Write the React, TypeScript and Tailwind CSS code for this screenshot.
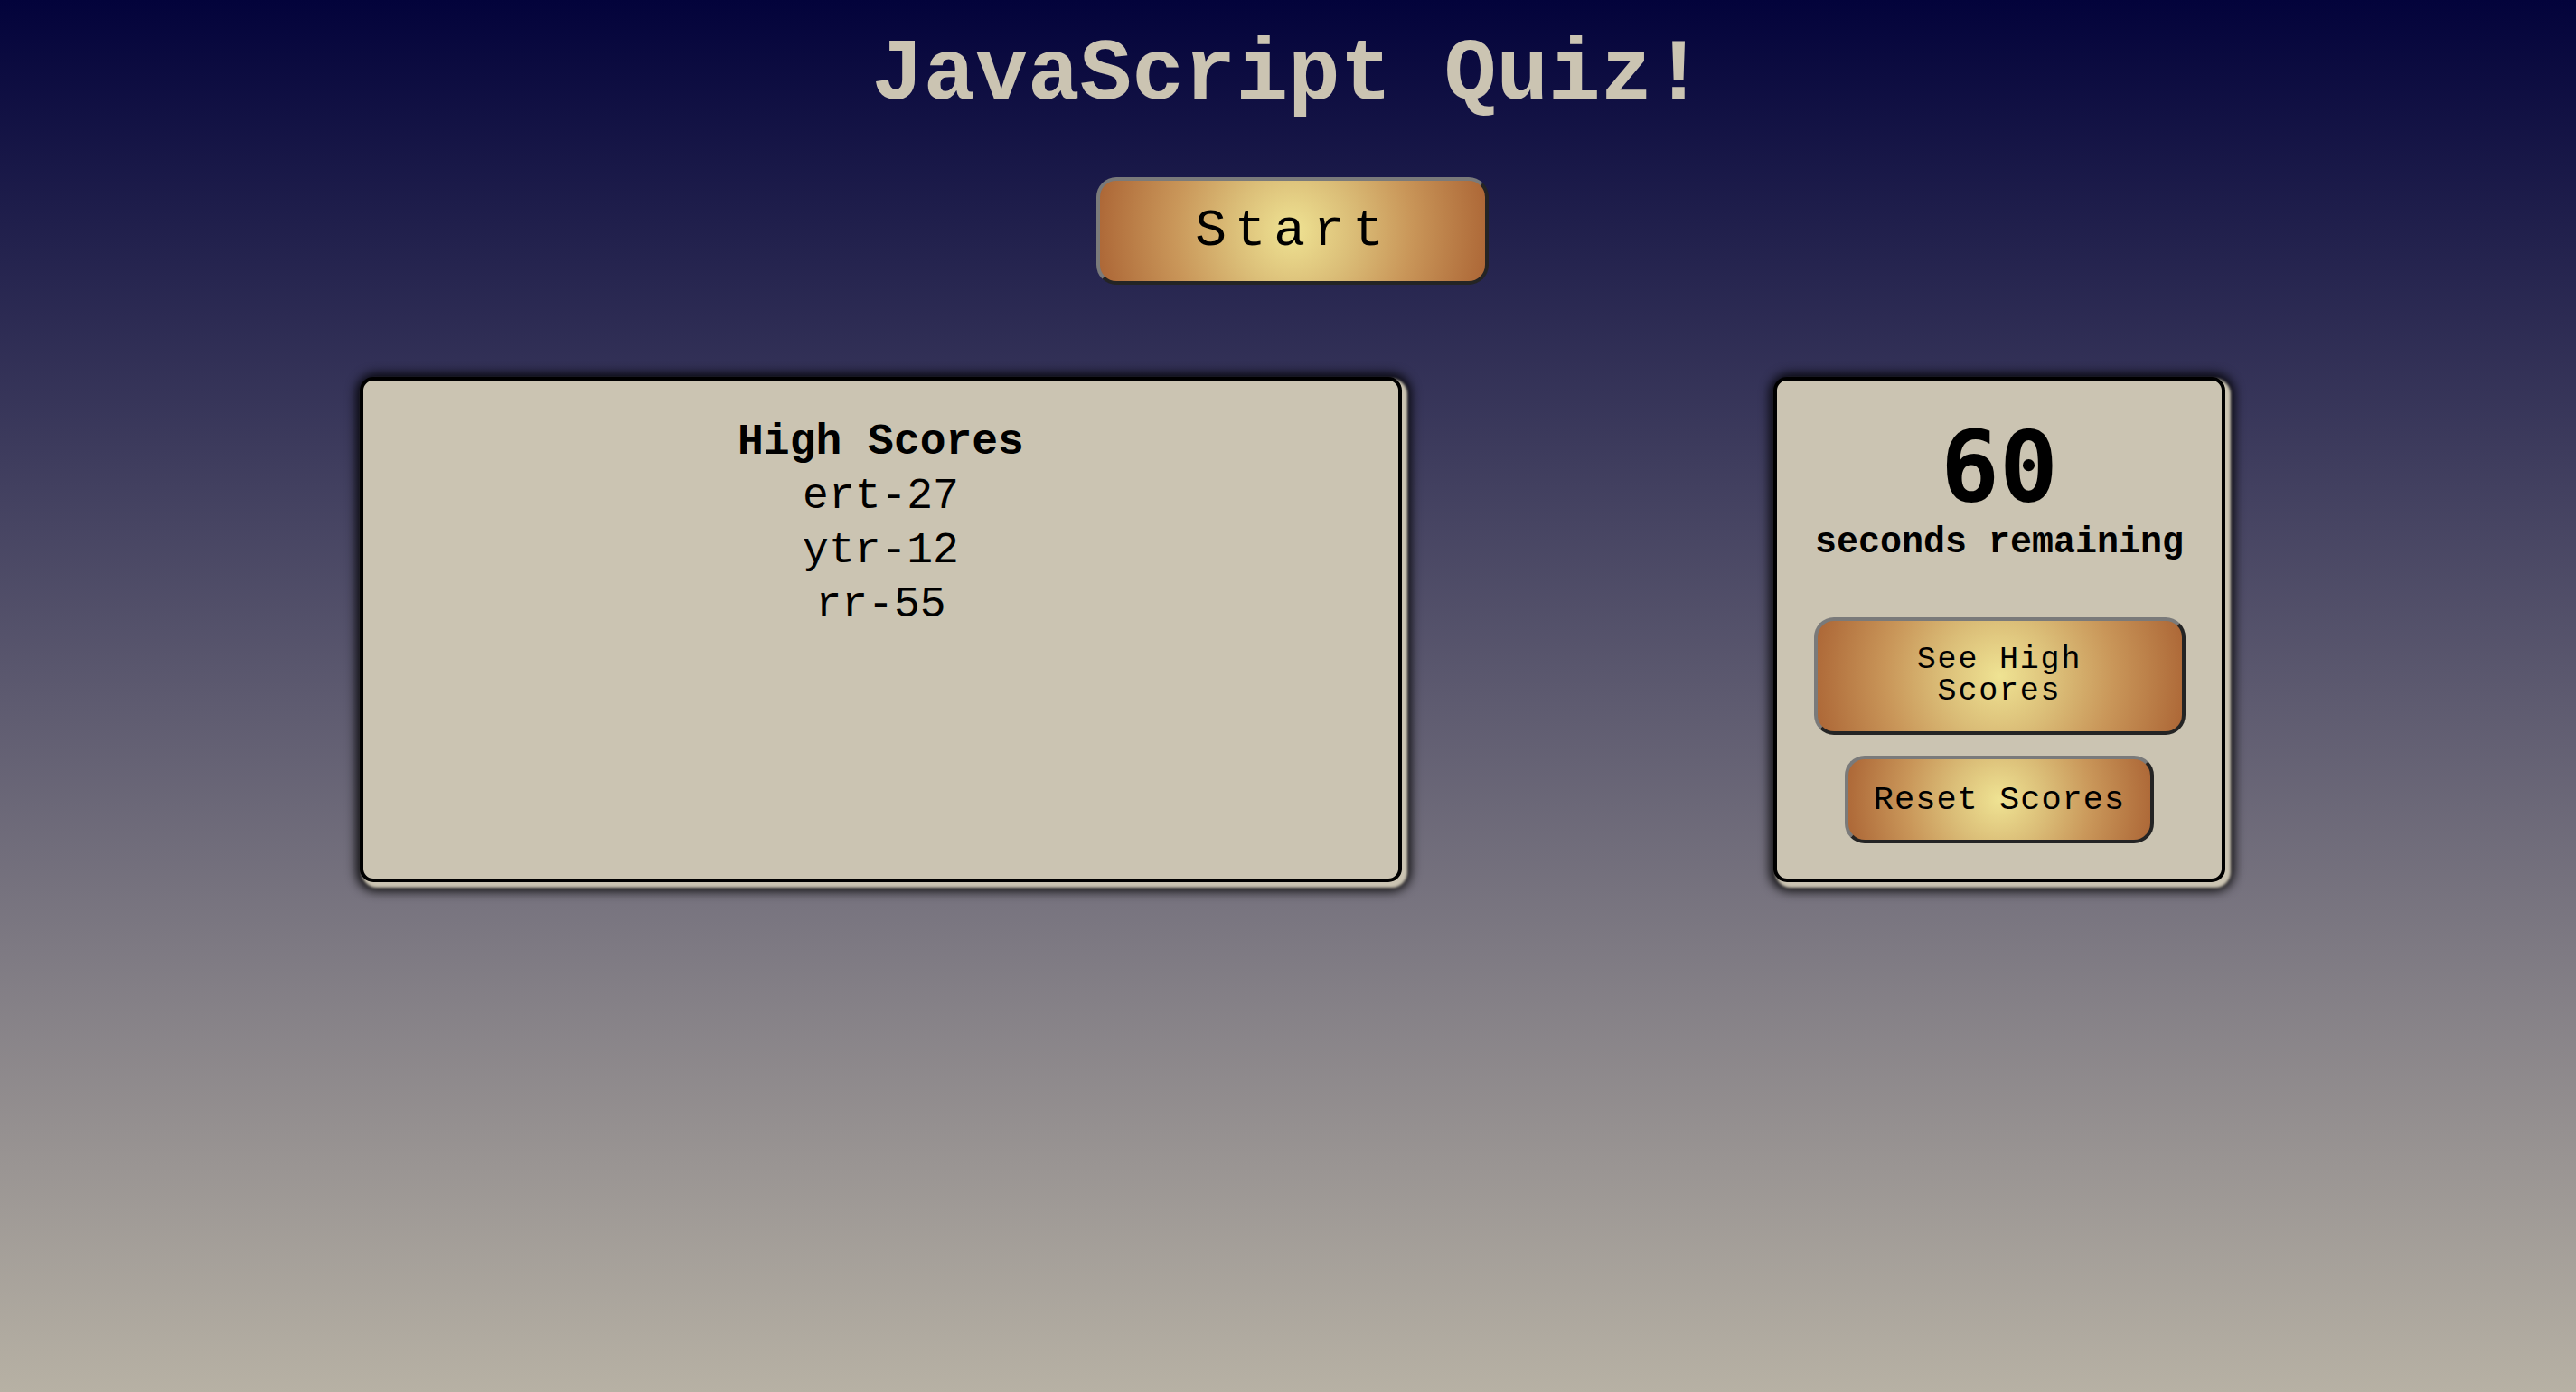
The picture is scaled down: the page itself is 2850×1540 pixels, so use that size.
const SCORES = ["ert-27", "ytr-12", "rr-55"];

const goldButton =
  "rounded-[22px] border-[4px] border-t-[#7a7a7a] border-l-[#7a7a7a] border-b-[#242424] border-r-[#242424] bg-[radial-gradient(circle,#efe393_0%,#dbbe78_30%,#c99659_60%,#ac6636_100%)] text-black";

const panel =
  "h-[559px] rounded-[15px] border-[4px] border-black bg-[#cbc4b2] text-black shadow-[4px_4px_3px_2px_#cbc4b2,3px_3px_12px_7px_rgba(0,0,0,0.9)]";

export default function App() {
  return (
    <div className="flex min-h-screen w-full flex-col items-center bg-[linear-gradient(to_bottom,#03033b,#b7b1a4)] font-['Courier_New','Nimbus_Mono_PS','FreeMono','Liberation_Mono',monospace]">
      <h1 className="pt-[36px] text-[96px] font-bold leading-none text-[#cbc4b2]">
        JavaScript Quiz!
      </h1>

      <button
        className={`${goldButton} ml-[10px] mt-[64px] flex h-[119px] w-[434px] items-center justify-center pl-[2px] text-[58px] leading-none tracking-[0.15em]`}
      >
        Start
      </button>

      <div className="mt-[102px] flex w-full items-start gap-[411px] pl-[398px]">
        {/* high scores */}
        <section className={`${panel} w-[1153px] pt-[38px] text-center`}>
          <h2 className="text-[48px] font-bold leading-[60px]">High Scores</h2>
          <ul className="text-[48px] leading-[60px]">
            {SCORES.map((s) => (
              <li key={s}>{s}</li>
            ))}
          </ul>
        </section>

        {/* timer */}
        <section className={`${panel} flex w-[500px] flex-col items-center pt-[42px]`}>
          <div className="font-['DejaVu_Sans_Mono',monospace] text-[108px] font-bold leading-none">
            60
          </div>
          <div className="mt-[10px] text-[40px] font-bold leading-[40px]">
            seconds remaining
          </div>
          <button
            className={`${goldButton} mt-[62px] flex h-[130px] w-[411px] flex-col items-center justify-center px-[35px] text-[35px] leading-[35px] tracking-[1.8px]`}
          >
            <span>See High</span>
            <span>Scores</span>
          </button>
          <button
            className={`${goldButton} mt-[23px] flex h-[97px] w-[342px] items-center justify-center text-[37px] leading-[34px] tracking-[1px]`}
          >
            Reset Scores
          </button>
        </section>
      </div>
    </div>
  );
}
